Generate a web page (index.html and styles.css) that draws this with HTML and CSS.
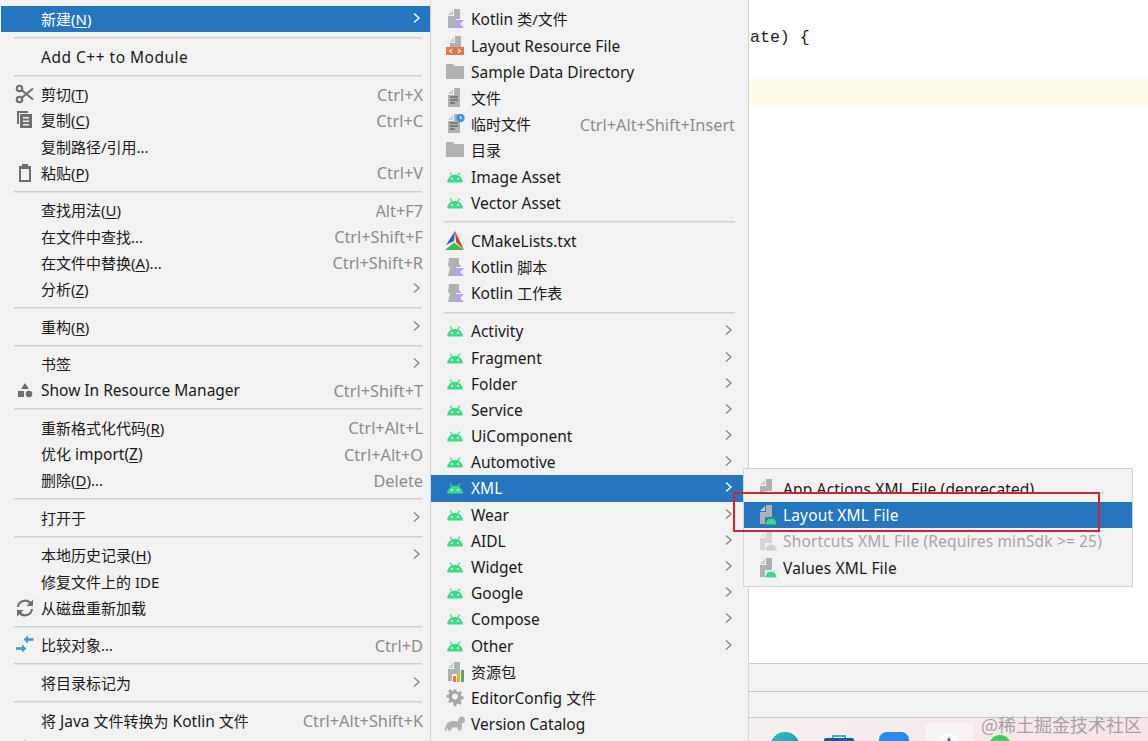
FILE: index.html
```html
<!DOCTYPE html>
<html lang="zh">
<head>
<meta charset="utf-8">
<title>Android Studio 新建菜单</title>
<link rel="stylesheet" href="styles.css">
</head>
<body>
<svg class="defs" width="0" height="0" aria-hidden="true">
  <defs>
    <symbol id="i-android" viewBox="0 0 20 20">
      <path d="M5.2 5.600 7 8.400M14.800 5.600 13 8.400" stroke="#3ddc84" stroke-width="1.300" fill="none"/>
      <path d="M2.200 15.500a7.800 7.800 0 0 1 15.600 0z" fill="#3ddc84"/>
      <circle cx="7" cy="12" r=".9" fill="#f2f2f2"/><circle cx="13" cy="12" r=".9" fill="#f2f2f2"/>
    </symbol>
    <symbol id="i-folder" viewBox="0 0 20 20">
      <path d="M1 2h7l2 2h9v13H1z" fill="#afb1b3"/>
    </symbol>
    <symbol id="i-file" viewBox="0 0 20 20">
      <path d="M3 6 8 1v5z" fill="#c9cbcd"/><path d="M9 0h6v19H3V7h6z" fill="#afb1b3"/>
    </symbol>
    <symbol id="i-kotlin" viewBox="0 0 20 20">
      <use href="#i-file"/>
      <path d="M11 10h9v10h-9z" fill="#f2f2f2"/>
      <path d="M11 11h8l-4 4 4 4h-8z" fill="#b99bf8"/>
    </symbol>
    <symbol id="i-kscript" viewBox="0 0 20 20">
      <path d="M4 1h10v6l2 2-3 10H3l2-8-2-2z" fill="#afb1b3"/>
      <path d="M11 10h9v10h-9z" fill="#f2f2f2"/>
      <path d="M11 11h8l-4 4 4 4h-8z" fill="#b99bf8"/>
    </symbol>
    <symbol id="i-layout" viewBox="0 0 20 20">
      <path d="M5 6 9 1v5z" fill="#c9cbcd"/><path d="M10 0h6v11H5V7h5z" fill="#afb1b3"/>
      <path d="M1 11h18v8H1z" fill="#e8764a"/>
      <path d="M7 13l-2.400 2L7 17M13 13l2.400 2L13 17" stroke="#f2f2f2" stroke-width="1.200" fill="none"/>
    </symbol>
    <symbol id="i-text" viewBox="0 0 20 20">
      <use href="#i-file"/>
      <path d="M5 9h8M5 12h8M5 15h5" stroke="#4a4a4a" stroke-width="1.200"/>
    </symbol>
    <symbol id="i-scratch" viewBox="0 0 20 20">
      <use href="#i-text"/>
      <circle cx="15.500" cy="4" r="4.200" fill="#3b97d8"/>
      <path d="M15.500 2v2.300h1.600" stroke="#fff" stroke-width=".9" fill="none"/>
    </symbol>
    <symbol id="i-cmake" viewBox="0 0 20 20">
      <path d="M10 0 1 14l8-4z" fill="#2f62c2"/>
      <path d="M10 0 19 19 11 11z" fill="#d0392e"/>
      <path d="M0 19 9 11.500 19 19z" fill="#3dbb4f"/>
    </symbol>
    <symbol id="i-xml" viewBox="0 0 20 20">
      <use href="#i-file"/>
      <path d="M8 12h12v8H8z" fill="#f2f2f2"/>
      <path d="M10.300 12.500 11.500 14M17.700 12.500 16.500 14" stroke="#3ddc84" stroke-width="1"/>
      <path d="M8.500 19.500a5.500 6 0 0 1 11 0z" fill="#3ddc84"/>
    </symbol>
    <symbol id="i-xml-off" viewBox="0 0 20 20">
      <path d="M3 6 8 1v5z" fill="#e2e3e4"/><path d="M9 0h6v19H3V7h6z" fill="#d4d5d6"/>
      <path d="M8 12h12v8H8z" fill="#f2f2f2"/>
      <path d="M8.500 19.500a5.500 6 0 0 1 11 0z" fill="#cfcfcf"/>
    </symbol>
    <symbol id="i-xml-sel" viewBox="0 0 20 20">
      <path d="M3 6 8 1v5z" fill="#c9cbcd"/><path d="M9 0h6v19H3V7h6z" fill="#afb1b3"/>
      <path d="M8 12h12v8H8z" fill="#2675bf"/>
      <path d="M10.300 12.500 11.500 14M17.700 12.500 16.500 14" stroke="#3ddc84" stroke-width="1"/>
      <path d="M8.500 19.500a5.500 6 0 0 1 11 0z" fill="#3ddc84"/>
    </symbol>
    <symbol id="i-bundle" viewBox="0 0 20 20">
      <use href="#i-file"/>
      <path d="M7 12h13v8H7z" fill="#f2f2f2"/>
      <path d="M8 14h3v6H8z" fill="#e8764a"/><path d="M12 11h3v9h-3z" fill="#e6b03c"/><path d="M16 8h3v12h-3z" fill="#59a869"/>
    </symbol>
    <symbol id="i-gear" viewBox="0 0 20 20">
      <path d="M8.500 1h3l.5 2.600 1.900.8 2.200-1.500 2 2.100-1.500 2.200.8 1.800 2.600.5v3l-2.600.5-.8 1.900 1.500 2.200-2 2-2.200-1.500-1.900.8-.5 2.600h-3L8 16.400l-1.900-.8-2.200 1.500-2-2 1.500-2.200-.8-1.900L0 10.500v-3l2.600-.5.800-1.800L1.900 3l2-2.100 2.200 1.500L8 3.600z" transform="translate(1.500 .5) scale(.85)" fill="#a3a5a7"/>
      <circle cx="10" cy="8.500" r="3" fill="#f2f2f2"/>
    </symbol>
    <symbol id="i-elephant" viewBox="0 0 20 20">
      <path d="M0 17c0-6 3-10 8-10 2 0 4 .5 5 .5 0-3 2-5 4-5 2 0 3 2 3 4 0 1-1 2-1 3l-2-1v3l-1 5h-3l-.5-3H7l-1 3H3l-.5-3L1 17z" fill="#afb1b3"/>
    </symbol>
    <symbol id="i-scissors" viewBox="0 0 20 20">
      <g fill="none" stroke="#6e6e6e" stroke-width="2">
        <circle cx="4.500" cy="4.500" r="2.800"/><circle cx="4.500" cy="15.500" r="2.800"/>
        <path d="M6.800 6.300 18 15.500M6.800 13.700 18 4.500"/>
      </g>
    </symbol>
    <symbol id="i-copy" viewBox="0 0 20 20">
      <path d="M2 1h11v2H4v11H2z" fill="#6e6e6e"/>
      <path d="M5 4h12v14H5z" fill="#6e6e6e"/>
      <path d="M8 7h6v1.500H8zM8 10.500h6V12H8zM8 14h6v1.500H8z" fill="#f2f2f2"/>
    </symbol>
    <symbol id="i-paste" viewBox="0 0 20 20">
      <path d="M4 3h3V1h6v2h3v16H4zM6 6v11h8V6z" fill="#6e6e6e" fill-rule="evenodd"/>
    </symbol>
    <symbol id="i-shapes" viewBox="0 0 20 20">
      <path d="M10 3l4 6H6z" fill="#6e6e6e"/><path d="M3 11h6v6H3z" fill="#6e6e6e"/><circle cx="14" cy="14" r="3.300" fill="#6e6e6e"/>
    </symbol>
    <symbol id="i-reload" viewBox="0 0 20 20">
      <g fill="none" stroke="#6e6e6e" stroke-width="2.200">
        <path d="M3 9a7 7 0 0 1 12.500-3.500"/><path d="M17 11a7 7 0 0 1-12.500 3.500"/>
      </g>
      <path d="M18 1.500V8h-6.500zM2 18.500V12h6.500z" fill="#6e6e6e"/>
    </symbol>
    <symbol id="i-compare" viewBox="0 0 20 20">
      <path d="M8.500 4.500 13 .5v8z" fill="#3b97d8"/>
      <path d="M13 3.200h5.500v2.600H13z" fill="#3b97d8"/>
      <path d="M11.500 13.500 7 9.500v8z" fill="#3b97d8"/>
      <path d="M1 12.200h6v2.600H1z" fill="#3b97d8"/>
    </symbol>
    <symbol id="i-chev" viewBox="0 0 8 12">
      <path d="M1 1.500 6 6 1 10.500" fill="none" stroke="currentColor" stroke-width="1.400"/>
    </symbol>
  </defs>
</svg>

<div class="desk">
  <main class="editor">
    <div class="code">ate) {</div>
    <div class="caret-line"></div>
  </main>
  <div class="band band-a"></div>
  <div class="band band-b"></div>
  <footer class="dock">
    <span class="d-app d-edge"></span>
    <svg class="d-bag" viewBox="0 0 30 12"><path d="M9 5V2h12v3" fill="none" stroke="#4aa8e0" stroke-width="2"/><rect y="4" width="30" height="12" rx="2" fill="#0f5fa8"/></svg>
    <span class="d-app d-blue"></span>
    <span class="d-tile"><svg class="d-tile-disc" viewBox="0 0 26 26"><circle cx="13" cy="13" r="13" fill="#fff"/><path d="M13 1.500 9.500 9h7z" fill="#3f6fb5"/></svg></span>
    <span class="d-app d-green"></span>
  </footer>
</div>

<nav class="menu menu-main">
  <div class="row sel"><span class="slot"></span><span class="label zh">新建(<u>N</u>)</span><svg class="chev"><use href="#i-chev"/></svg></div>
  <hr class="sep">
  <div class="row"><span class="slot"></span><span class="label wide">Add C++ to Module</span></div>
  <hr class="sep">
  <div class="row"><svg class="ico"><use href="#i-scissors"/></svg><span class="label zh">剪切(<u>T</u>)</span><span class="key">Ctrl+X</span></div>
  <div class="row"><svg class="ico"><use href="#i-copy"/></svg><span class="label zh">复制(<u>C</u>)</span><span class="key">Ctrl+C</span></div>
  <div class="row"><span class="slot"></span><span class="label zh">复制路径/引用...</span></div>
  <div class="row"><svg class="ico"><use href="#i-paste"/></svg><span class="label zh">粘贴(<u>P</u>)</span><span class="key">Ctrl+V</span></div>
  <hr class="sep">
  <div class="row"><span class="slot"></span><span class="label zh">查找用法(<u>U</u>)</span><span class="key">Alt+F7</span></div>
  <div class="row"><span class="slot"></span><span class="label zh">在文件中查找...</span><span class="key">Ctrl+Shift+F</span></div>
  <div class="row"><span class="slot"></span><span class="label zh">在文件中替换(<u>A</u>)...</span><span class="key">Ctrl+Shift+R</span></div>
  <div class="row"><span class="slot"></span><span class="label zh">分析(<u>Z</u>)</span><svg class="chev"><use href="#i-chev"/></svg></div>
  <hr class="sep">
  <div class="row"><span class="slot"></span><span class="label zh">重构(<u>R</u>)</span><svg class="chev"><use href="#i-chev"/></svg></div>
  <hr class="sep">
  <div class="row"><span class="slot"></span><span class="label zh">书签</span><svg class="chev"><use href="#i-chev"/></svg></div>
  <div class="row"><svg class="ico"><use href="#i-shapes"/></svg><span class="label">Show In Resource Manager</span><span class="key">Ctrl+Shift+T</span></div>
  <hr class="sep">
  <div class="row"><span class="slot"></span><span class="label zh">重新格式化代码(<u>R</u>)</span><span class="key">Ctrl+Alt+L</span></div>
  <div class="row"><span class="slot"></span><span class="label"><span class="zh">优化</span> import(<u>Z</u>)</span><span class="key">Ctrl+Alt+O</span></div>
  <div class="row"><span class="slot"></span><span class="label zh">删除(<u>D</u>)...</span><span class="key">Delete</span></div>
  <hr class="sep">
  <div class="row"><span class="slot"></span><span class="label zh">打开于</span><svg class="chev"><use href="#i-chev"/></svg></div>
  <hr class="sep">
  <div class="row"><span class="slot"></span><span class="label zh">本地历史记录(<u>H</u>)</span><svg class="chev"><use href="#i-chev"/></svg></div>
  <div class="row"><span class="slot"></span><span class="label zh">修复文件上的 IDE</span></div>
  <div class="row"><svg class="ico"><use href="#i-reload"/></svg><span class="label zh">从磁盘重新加载</span></div>
  <hr class="sep">
  <div class="row"><svg class="ico"><use href="#i-compare"/></svg><span class="label zh">比较对象...</span><span class="key">Ctrl+D</span></div>
  <hr class="sep">
  <div class="row"><span class="slot"></span><span class="label zh">将目录标记为</span><svg class="chev"><use href="#i-chev"/></svg></div>
  <hr class="sep">
  <div class="row"><span class="slot"></span><span class="label"><span class="zh">将</span> Java <span class="zh">文件转换为</span> Kotlin <span class="zh">文件</span></span><span class="key">Ctrl+Alt+Shift+K</span></div>
  <div class="row"><svg class="ico"><use href="#i-shapes"/></svg></div>
</nav>

<nav class="menu menu-new">
  <div class="row"><svg class="ico"><use href="#i-kotlin"/></svg><span class="label">Kotlin <span class="zh">类/文件</span></span></div>
  <div class="row"><svg class="ico"><use href="#i-layout"/></svg><span class="label">Layout Resource File</span></div>
  <div class="row"><svg class="ico"><use href="#i-folder"/></svg><span class="label">Sample Data Directory</span></div>
  <div class="row"><svg class="ico"><use href="#i-text"/></svg><span class="label zh">文件</span></div>
  <div class="row"><svg class="ico"><use href="#i-scratch"/></svg><span class="label zh">临时文件</span><span class="key">Ctrl+Alt+Shift+Insert</span></div>
  <div class="row"><svg class="ico"><use href="#i-folder"/></svg><span class="label zh">目录</span></div>
  <div class="row"><svg class="ico"><use href="#i-android"/></svg><span class="label">Image Asset</span></div>
  <div class="row"><svg class="ico"><use href="#i-android"/></svg><span class="label">Vector Asset</span></div>
  <hr class="sep">
  <div class="row"><svg class="ico"><use href="#i-cmake"/></svg><span class="label">CMakeLists.txt</span></div>
  <div class="row"><svg class="ico"><use href="#i-kscript"/></svg><span class="label">Kotlin <span class="zh">脚本</span></span></div>
  <div class="row"><svg class="ico"><use href="#i-kscript"/></svg><span class="label">Kotlin <span class="zh">工作表</span></span></div>
  <hr class="sep">
  <div class="row"><svg class="ico"><use href="#i-android"/></svg><span class="label">Activity</span><svg class="chev"><use href="#i-chev"/></svg></div>
  <div class="row"><svg class="ico"><use href="#i-android"/></svg><span class="label">Fragment</span><svg class="chev"><use href="#i-chev"/></svg></div>
  <div class="row"><svg class="ico"><use href="#i-android"/></svg><span class="label">Folder</span><svg class="chev"><use href="#i-chev"/></svg></div>
  <div class="row"><svg class="ico"><use href="#i-android"/></svg><span class="label">Service</span><svg class="chev"><use href="#i-chev"/></svg></div>
  <div class="row"><svg class="ico"><use href="#i-android"/></svg><span class="label">UiComponent</span><svg class="chev"><use href="#i-chev"/></svg></div>
  <div class="row"><svg class="ico"><use href="#i-android"/></svg><span class="label">Automotive</span><svg class="chev"><use href="#i-chev"/></svg></div>
  <div class="row sel"><svg class="ico"><use href="#i-android"/></svg><span class="label">XML</span><svg class="chev"><use href="#i-chev"/></svg></div>
  <div class="row"><svg class="ico"><use href="#i-android"/></svg><span class="label">Wear</span><svg class="chev"><use href="#i-chev"/></svg></div>
  <div class="row"><svg class="ico"><use href="#i-android"/></svg><span class="label">AIDL</span><svg class="chev"><use href="#i-chev"/></svg></div>
  <div class="row"><svg class="ico"><use href="#i-android"/></svg><span class="label">Widget</span><svg class="chev"><use href="#i-chev"/></svg></div>
  <div class="row"><svg class="ico"><use href="#i-android"/></svg><span class="label">Google</span><svg class="chev"><use href="#i-chev"/></svg></div>
  <div class="row"><svg class="ico"><use href="#i-android"/></svg><span class="label">Compose</span><svg class="chev"><use href="#i-chev"/></svg></div>
  <div class="row"><svg class="ico"><use href="#i-android"/></svg><span class="label">Other</span><svg class="chev"><use href="#i-chev"/></svg></div>
  <div class="row"><svg class="ico"><use href="#i-bundle"/></svg><span class="label zh">资源包</span></div>
  <div class="row"><svg class="ico"><use href="#i-gear"/></svg><span class="label">EditorConfig <span class="zh">文件</span></span></div>
  <div class="row"><svg class="ico"><use href="#i-elephant"/></svg><span class="label">Version Catalog</span></div>
</nav>

<nav class="menu menu-xml">
  <div class="row"><svg class="ico"><use href="#i-xml"/></svg><span class="label">App Actions XML File (deprecated)</span></div>
  <div class="row sel"><svg class="ico"><use href="#i-xml-sel"/></svg><span class="label">Layout XML File</span></div>
  <div class="row off"><svg class="ico"><use href="#i-xml-off"/></svg><span class="label">Shortcuts XML File (Requires minSdk &gt;= 25)</span></div>
  <div class="row"><svg class="ico"><use href="#i-xml"/></svg><span class="label">Values XML File</span></div>
</nav>

<div class="callout"></div>
<div class="watermark">@稀土掘金技术社区</div>
</body>
</html>
```
FILE: styles.css
```css
* { box-sizing: border-box; }

html, body {
  margin: 0;
  height: 741px;
  overflow: hidden;
  background: #fff;
}

body {
  position: relative;
  font-family: "Noto Sans", "Noto Sans CJK SC", sans-serif;
  font-size: 15.5px;
  color: #1a1a1a;
}

.defs { position: absolute; }

/* page behind the menus */
.desk {
  height: 741px;
  padding-left: 748px;
  display: flex;
  flex-direction: column;
}

.editor {
  flex: 1;
  padding-top: 25px;
  border-left: 1px solid #cfcfcf;
}

.code {
  height: 26px;
  padding-left: 1px;
  font: 16.6px/26px "Liberation Mono", monospace;
  color: #1e1e1e;
}

.caret-line {
  height: 26px;
  margin-top: 28px;
  background: #fffbe9;
}

.band {
  background: #f2f2f2;
  border-top: 1px solid #c9c9c9;
  border-left: 1px solid #cfcfcf;
}
.band-a { height: 28px; }
.band-b { height: 26px; }

.dock {
  height: 24px;
  display: flex;
  align-items: flex-start;
  overflow: hidden;
  padding-left: 22px;
  border-top: 1px solid #c9c9c9;
  background: linear-gradient(90deg, #f5f0ef, #f7e9e7 60%, #f8e4e4);
}

.d-app {
  flex: none;
  width: 30px;
  height: 30px;
  border-radius: 50%;
}
.d-edge { margin-top: 14px; background: linear-gradient(135deg, #35c0b0, #1b86d6); }
.d-blue { margin: 14px 0 0 25px; background: #2b87f0; border-radius: 8px; }
.d-bag { flex: none; width: 30px; height: 12px; margin: 16px 0 0 24px; }
.d-tile {
  flex: none;
  width: 48px;
  height: 40px;
  margin: 5px 0 0 16px;
  border-radius: 4px;
  background: #f8f4f1;
  display: flex;
  justify-content: center;
  padding-top: 12px;
}
.d-tile-disc { width: 26px; height: 26px; }
.d-green { width: 22px; height: 22px; margin: 17px 0 0 16px; background: #3fcf5e; }

/* context menus */
.menu {
  position: absolute;
  background: #f2f2f2;
  --row: 26.2px;
  --gap: 11.4px;
}

.menu-main {
  left: 0;
  top: 0;
  width: 431px;
  height: 741px;
  padding: 6px 0 0 1px;
  border-right: 1px solid #d4d4d4;
}

.menu-new {
  left: 431px;
  top: 0;
  width: 318px;
  height: 741px;
  padding-top: 6.4px;
  border-right: 1px solid #d4d4d4;
  --gap: 11.9px;
  --inset: 14px;
}

.menu-xml {
  left: 743px;
  top: 468px;
  width: 390px;
  height: 119px;
  padding-top: 7px;
  border: 1px solid #d4d4d4;
  --inset: 13px;
}

.row {
  height: var(--row);
  display: flex;
  align-items: center;
  padding: 0 7px 0 var(--inset, 14px);
  white-space: nowrap;
  line-height: 20px;
}

.menu-new .row { padding-right: 13px; }
.menu-xml .row { padding-right: 13px; }
.menu-xml .label { letter-spacing: .15px; }

.slot, .ico {
  flex: none;
  width: 20px;
  height: 20px;
  margin-right: 6px;
}

.label { flex: 1; }
.zh { font-size: 15px; }
.wide { letter-spacing: .5px; }
.key { color: #8c8c8c; font-size: 16.3px; margin-top: 1px; }
.chev { flex: none; width: 8px; height: 12px; color: #8a8a8a; margin: -2px 2px 0 0; }
u { text-underline-offset: 2px; }

.sel { background: #2675bf; color: #fff; }
.sel .chev { color: #fff; }
.off { color: #a6a6a6; }

.sep {
  height: var(--gap);
  margin: 0 8px 0 13px;
  border: 0;
  background: linear-gradient(#d0d0d0, #d0d0d0) center / 100% 1.5px no-repeat;
}

.menu-new .sep { margin-right: 13px; }

/* annotation on top of the screenshot; its top strip hides the row above */
.callout {
  position: absolute;
  left: 733px;
  top: 492px;
  width: 367px;
  height: 40px;
  border: 2px solid #d3232e;
  background: linear-gradient(#f2f2f2, #f2f2f2) 9px 0 / 100% 8px no-repeat;
}

.watermark {
  position: absolute;
  right: 6px;
  top: 712px;
  font-family: "Noto Sans CJK SC", sans-serif;
  font-size: 18px;
  line-height: 24px;
  color: #a3a3a3;
}
```
